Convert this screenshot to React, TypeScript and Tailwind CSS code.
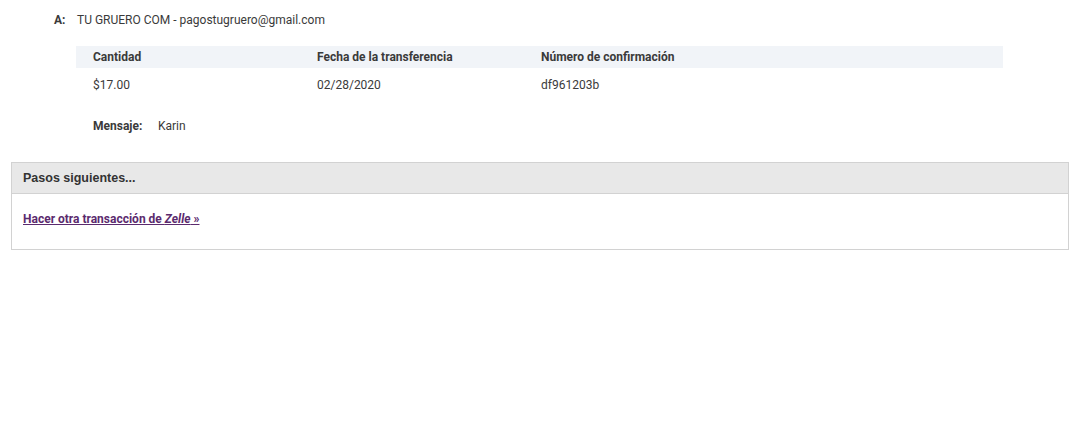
const COLUMNS = [
  { label: 'Cantidad', value: '$17.00' },
  { label: 'Fecha de la transferencia', value: '02/28/2020' },
  { label: 'Número de confirmación', value: 'df961203b' },
] as const;

export default function App() {
  return (
    <div className="w-[1080px] h-[430px] bg-white text-[#3a3a3a] font-['Roboto',sans-serif] text-[12px]">
      {/* Recipient */}
      <div className="flex items-center pt-[13px] pl-[54px] h-[27px] leading-[15px]">
        <span className="font-bold w-[23px]">A:</span>
        <span>TU GRUERO COM - pagostugruero@gmail.com</span>
      </div>

      {/* Transfer details */}
      <div className="ml-[76px] mt-[19px] w-[927px]">
        <div className="grid grid-cols-[224px_224px_1fr] bg-[#f1f4f8] h-[22px] items-center pl-[17px] font-bold">
          {COLUMNS.map((c) => (
            <span key={c.label}>{c.label}</span>
          ))}
        </div>
        <div className="grid grid-cols-[224px_224px_1fr] h-[34px] items-center pl-[17px]">
          {COLUMNS.map((c) => (
            <span key={c.label}>{c.value}</span>
          ))}
        </div>
        <div className="flex items-center pl-[17px] mt-[16px] h-[15px]">
          <span className="font-bold w-[65px]">Mensaje:</span>
          <span>Karin</span>
        </div>
      </div>

      {/* Next steps */}
      <div className="ml-[11px] mt-[29px] w-[1058px] border border-[#d2d2d2]">
        <div className="h-[31px] bg-[#e8e8e8] border-b border-[#d2d2d2] flex items-center pl-[11px] font-['Liberation_Sans',sans-serif] font-bold text-[12.5px] text-[#333]">
          Pasos siguientes...
        </div>
        <div className="h-[55px] flex items-center pl-[11px] pb-[6px]">
          <a href="#" className="font-bold text-[#5b2a6e] underline">
            Hacer otra transacción de <i>Zelle</i> »
          </a>
        </div>
      </div>
    </div>
  );
}
